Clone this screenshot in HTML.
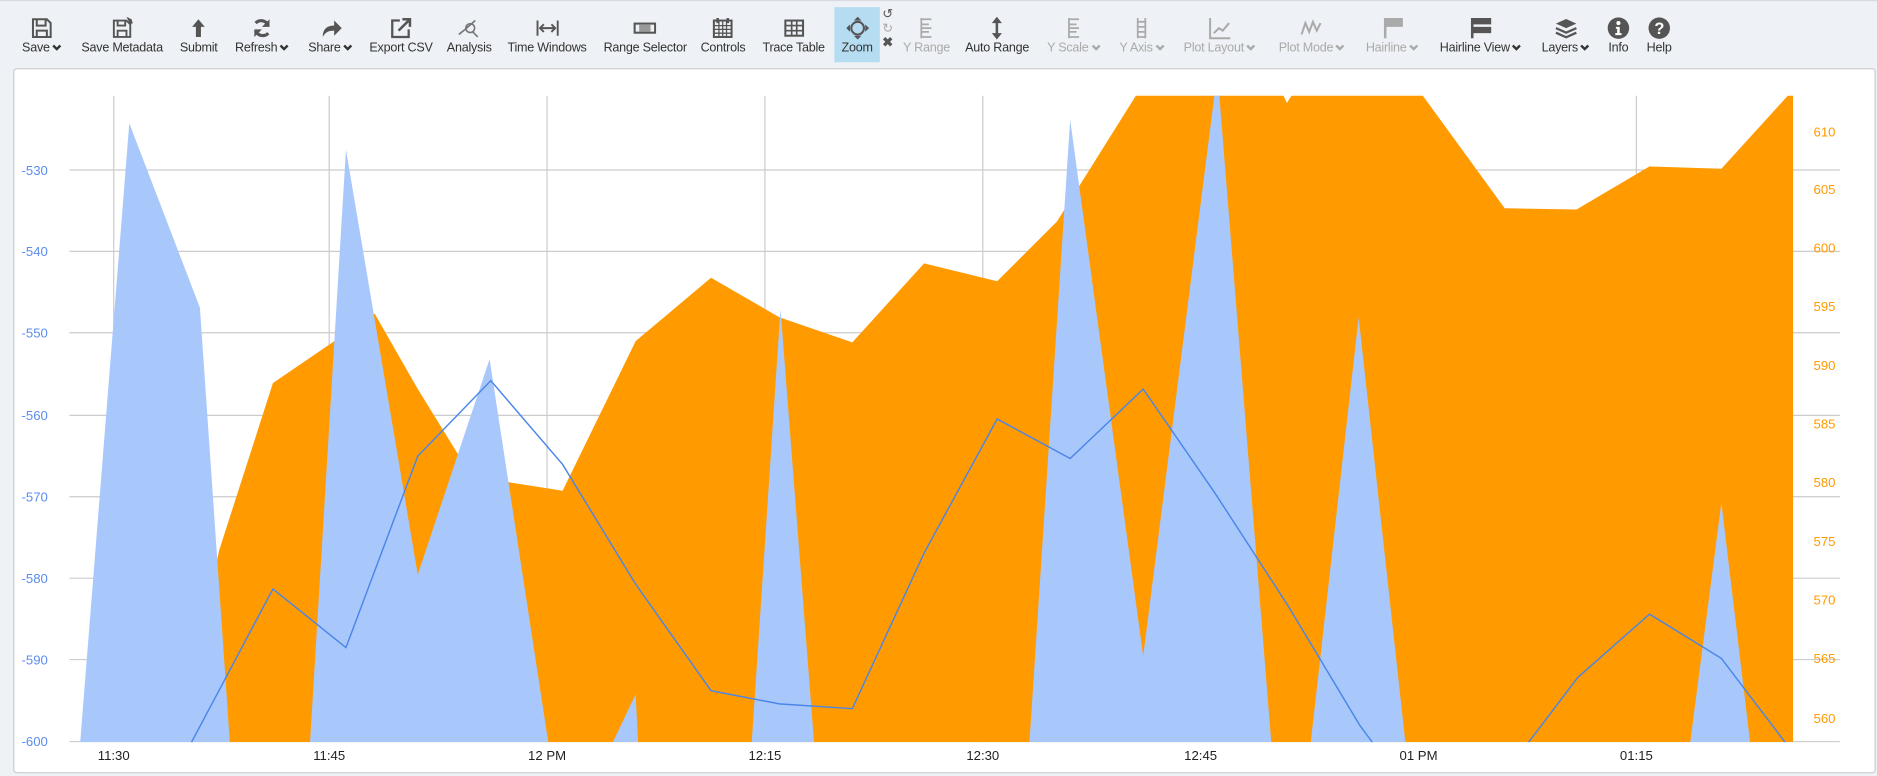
<!DOCTYPE html>
<html><head><meta charset="utf-8"><style>
html,body{margin:0;padding:0;width:1877px;height:776px;overflow:hidden;background:#eef1f5}
#w{position:absolute;left:0;top:0;width:1568px;height:648px;transform:scale(1.19706);transform-origin:0 0;font-family:"Liberation Sans",sans-serif;font-size:11px;color:#333}
.tb{position:absolute;top:0;left:0;width:1568px;height:56px;background:#eef1f5;border-top:1px solid #d8dbe0}
.it{position:absolute;top:5px;height:46px;text-align:center;white-space:nowrap;transform:translateX(-50%);font-size:10.5px;letter-spacing:-0.2px}
.it svg{display:block;margin:8px auto 1px;width:19px;height:19px}
.it.d{color:#aaa}
.it i{display:inline-block;width:8px;height:6px;margin-left:2px;vertical-align:middle}
.zm{position:absolute;left:697px;top:5px;width:38px;height:46px;background:#b5dcf0}
.pn{position:absolute;left:11px;top:57px;width:1554px;height:587px;background:#fff;border:1px solid #ccc;border-radius:3px}
</style></head><body><div id="w">
<svg width="0" height="0" style="position:absolute"><defs><symbol id="ch" viewBox="0 0 8 6"><path d="M1 1l3 3 3-3" fill="none" stroke="currentColor" stroke-width="2"/></symbol></defs></svg>
<div class="tb">
<div class="zm"></div>
<div class="it" style="left:35px"><svg viewBox="0 0 18 18"><path d="M2 2h11l3 3v11H2z M5 2v5h7V2 M5 11h8v5H5z" fill="none" stroke="#555" stroke-width="1.6"/></svg>Save<i><svg viewBox="0 0 8 6" style="width:8px;height:6px;margin:0"><use href="#ch"/></svg></i></div>
<div class="it" style="left:102px"><svg viewBox="0 0 18 18"><path d="M2 3h10l3 3v10H2z M5 3v4h6V3 M5 11h7v5H5z" fill="none" stroke="#555" stroke-width="1.5"/><path d="M12 0l4 2 1 3-2 1z" fill="#555"/></svg>Save Metadata</div>
<div class="it" style="left:166px"><svg viewBox="0 0 18 18"><path d="M9 2l-5 6h3v8h4V8h3z" fill="#555"/></svg>Submit</div>
<div class="it" style="left:219px"><svg viewBox="0 0 18 18"><path d="M14 7a6 6 0 0 0-10-2M4 11a6 6 0 0 0 10 2" fill="none" stroke="#555" stroke-width="2.5"/><path d="M15 2v6h-6zM3 16v-6h6z" fill="#555"/></svg>Refresh<i><svg viewBox="0 0 8 6" style="width:8px;height:6px;margin:0"><use href="#ch"/></svg></i></div>
<div class="it" style="left:276px"><svg viewBox="0 0 18 18"><path d="M3 16c0-7 4-9 9-9V3l6 6-6 6v-4c-4 0-7 1-9 5z" fill="#555"/></svg>Share<i><svg viewBox="0 0 8 6" style="width:8px;height:6px;margin:0"><use href="#ch"/></svg></i></div>
<div class="it" style="left:335px"><svg viewBox="0 0 18 18"><path d="M8 3H2v13h13v-6" fill="none" stroke="#555" stroke-width="1.8"/><path d="M7 11l8-8M10 2h6v6" fill="none" stroke="#555" stroke-width="2"/></svg>Export CSV</div>
<div class="it" style="left:392px"><svg viewBox="0 0 18 18"><circle cx="10" cy="9" r="3.5" fill="none" stroke="#777" stroke-width="1.3"/><path d="M1 14l5-4 8-7M12 12l4 4" stroke="#777" stroke-width="1.3" fill="none"/></svg>Analysis</div>
<div class="it" style="left:457px"><svg viewBox="0 0 18 18"><path d="M1 3v12M17 3v12M3 9h12M6 6l-3 3 3 3M12 6l3 3-3 3" fill="none" stroke="#555" stroke-width="1.5"/></svg>Time Windows</div>
<div class="it" style="left:539px"><svg viewBox="0 0 20 18"><rect x="1" y="5" width="18" height="8" fill="none" stroke="#555" stroke-width="1.8"/><rect x="5" y="6" width="10" height="6" fill="#999"/></svg>Range Selector</div>
<div class="it" style="left:604px"><svg viewBox="0 0 18 18"><rect x="2" y="3" width="14" height="13" fill="none" stroke="#555" stroke-width="1.6"/><path d="M2 7h14M2 10h14M2 13h14M6 3v13M9 3v13M12 3v13" stroke="#555" stroke-width="1"/><path d="M5 1v4M13 1v4" stroke="#555" stroke-width="2"/></svg>Controls</div>
<div class="it" style="left:663px"><svg viewBox="0 0 18 18"><rect x="2" y="3" width="14" height="12" fill="none" stroke="#555" stroke-width="1.6"/><path d="M2 7h14M2 11h14M7 3v12M11 3v12" stroke="#555" stroke-width="1.3"/></svg>Trace Table</div>
<div class="it" style="left:716px"><svg viewBox="0 0 18 18"><circle cx="9" cy="9" r="5" fill="none" stroke="#555" stroke-width="1.6"/><path d="M9 0l-3 3h6zM9 18l-3-3h6zM0 9l3-3v6zM18 9l-3-3v6z" fill="#555"/></svg>Zoom</div>
<div style="position:absolute;left:737px;top:5px;font-size:11px;line-height:12px;color:#555">↺<br><span style="color:#aaa">↻</span><br><b>✖</b></div>
<div class="it d" style="left:774px"><svg viewBox="0 0 18 18"><path d="M5 1v16M5 2h8M5 6h6M5 9h8M5 12h6M5 16h8" stroke="#aaa" stroke-width="1.4" fill="none"/></svg>Y Range</div>
<div class="it" style="left:833px"><svg viewBox="0 0 18 18"><path d="M9 3v12" stroke="#555" stroke-width="2"/><path d="M9 0l-4 5h8zM9 18l-4-5h8z" fill="#555"/></svg>Auto Range</div>
<div class="it d" style="left:897px"><svg viewBox="0 0 18 18"><path d="M5 1v16M5 2h8M5 6h6M5 9h8M5 12h6M5 16h8" stroke="#aaa" stroke-width="1.4" fill="none"/></svg>Y Scale<i><svg viewBox="0 0 8 6" style="width:8px;height:6px;margin:0"><use href="#ch"/></svg></i></div>
<div class="it d" style="left:954px"><svg viewBox="0 0 18 18"><path d="M6 1v16M12 1v16M6 4h6M6 8h6M6 12h6M6 16h6" stroke="#aaa" stroke-width="1.4" fill="none"/></svg>Y Axis<i><svg viewBox="0 0 8 6" style="width:8px;height:6px;margin:0"><use href="#ch"/></svg></i></div>
<div class="it d" style="left:1019px"><svg viewBox="0 0 18 18"><path d="M1 1v16h16M4 13l4-4 3 2 5-6" stroke="#aaa" stroke-width="1.6" fill="none"/></svg>Plot Layout<i><svg viewBox="0 0 8 6" style="width:8px;height:6px;margin:0"><use href="#ch"/></svg></i></div>
<div class="it d" style="left:1096px"><svg viewBox="0 0 18 18"><path d="M1 14l3-9 3 7 3-8 3 7 3-6" stroke="#aaa" stroke-width="1.6" fill="none"/></svg>Plot Mode<i><svg viewBox="0 0 8 6" style="width:8px;height:6px;margin:0"><use href="#ch"/></svg></i></div>
<div class="it d" style="left:1163px"><svg viewBox="0 0 18 18"><path d="M2 1h15v7H4v9H2z" fill="#aaa"/></svg>Hairline<i><svg viewBox="0 0 8 6" style="width:8px;height:6px;margin:0"><use href="#ch"/></svg></i></div>
<div class="it" style="left:1237px"><svg viewBox="0 0 18 18"><path d="M1 1h16v5H3v2h14v5H3v4H1z" fill="#555"/></svg>Hairline View<i><svg viewBox="0 0 8 6" style="width:8px;height:6px;margin:0"><use href="#ch"/></svg></i></div>
<div class="it" style="left:1308px"><svg viewBox="0 0 20 18"><path d="M10 1l9 4-9 4-9-4z" fill="#555"/><path d="M1 9l9 4 9-4M1 13l9 4 9-4" stroke="#555" stroke-width="2" fill="none"/></svg>Layers<i><svg viewBox="0 0 8 6" style="width:8px;height:6px;margin:0"><use href="#ch"/></svg></i></div>
<div class="it" style="left:1352px"><svg viewBox="0 0 18 18"><circle cx="9" cy="9" r="8.5" fill="#555"/><circle cx="9" cy="5" r="1.6" fill="#fff"/><path d="M7 8h3v5h1.5v1.5h-5V13H8V9.5H7z" fill="#fff"/></svg>Info</div>
<div class="it" style="left:1386px"><svg viewBox="0 0 18 18"><circle cx="9" cy="9" r="8.5" fill="#555"/><text x="9" y="13.5" font-size="13" font-weight="bold" text-anchor="middle" fill="#fff" font-family="Liberation Sans">?</text></svg>Help</div>
</div>
<div class="pn"></div>
<svg style="position:absolute;left:0;top:0" width="1568" height="648" viewBox="0 0 1568 648" font-family="Liberation Sans" font-size="11">
<defs><clipPath id="c"><rect x="60" y="80" width="1438" height="540"/></clipPath></defs>
<g stroke="#ccc" stroke-width="1">
<path d="M95 80V620M275 80V620M457 80V620M639 80V620M821 80V620M1003 80V620M1185 80V620M1367 80V620"/>
<path d="M58 142H1537M58 210H1537M58 278H1537M58 347H1537M58 415H1537M58 483H1537M58 551H1537M58 619.5H1537"/>
</g>
<g clip-path="url(#c)">
<polygon fill="#ff9a00" points="150,620 183,460 228,320 313,262 349,325 394,398 470,410 531,285 594,232 651,265 712,286 772,220 833,235 883,185 952,75 1070,75 1075,86 1082,75 1185,75 1257,174 1317,175 1378,139 1438,141 1498,75 1498,620"/>
<g fill="#a8c8fc">
<polygon points="67,620 108,103 167,257 192,620"/>
<polygon points="259,620 289,125 349,480 409,300 458,620"/>
<polygon points="512,620 531,580 533,620"/>
<polygon points="628,620 652,258 680,620"/>
<polygon points="860,620 894,100 955,548 1017,60 1062,620"/>
<polygon points="1095,620 1135,265 1174,620"/>
<polygon points="1412,620 1438,420 1462,620"/>
</g>
<polyline fill="none" stroke="#4a86e8" stroke-width="1.2" points="150,640 160,620 228,492 289,541 349,381 410,318 470,388 531,488 594,577 651,588 712,592 772,462 833,350 894,383 955,325 1015,412 1076,506 1136,606 1150,625"/>
<polyline fill="none" stroke="#4a86e8" stroke-width="1.2" points="1272,628 1277,620 1318,566 1378,513 1438,550 1495,625"/>
</g>
<g fill="#5b8def" text-anchor="end">
<text x="40" y="146">-530</text><text x="40" y="214">-540</text><text x="40" y="282">-550</text><text x="40" y="351">-560</text><text x="40" y="419">-570</text><text x="40" y="487">-580</text><text x="40" y="555">-590</text><text x="40" y="623">-600</text>
</g>
<g fill="#ff9a00">
<text x="1515" y="114">610</text><text x="1515" y="162">605</text><text x="1515" y="211">600</text><text x="1515" y="260">595</text><text x="1515" y="309">590</text><text x="1515" y="358">585</text><text x="1515" y="407">580</text><text x="1515" y="456">575</text><text x="1515" y="505">570</text><text x="1515" y="554">565</text><text x="1515" y="604">560</text>
</g>
<g fill="#222" text-anchor="middle">
<text x="95" y="635">11:30</text><text x="275" y="635">11:45</text><text x="457" y="635">12 PM</text><text x="639" y="635">12:15</text><text x="821" y="635">12:30</text><text x="1003" y="635">12:45</text><text x="1185" y="635">01 PM</text><text x="1367" y="635">01:15</text>
</g>
</svg>
</div></body></html>
